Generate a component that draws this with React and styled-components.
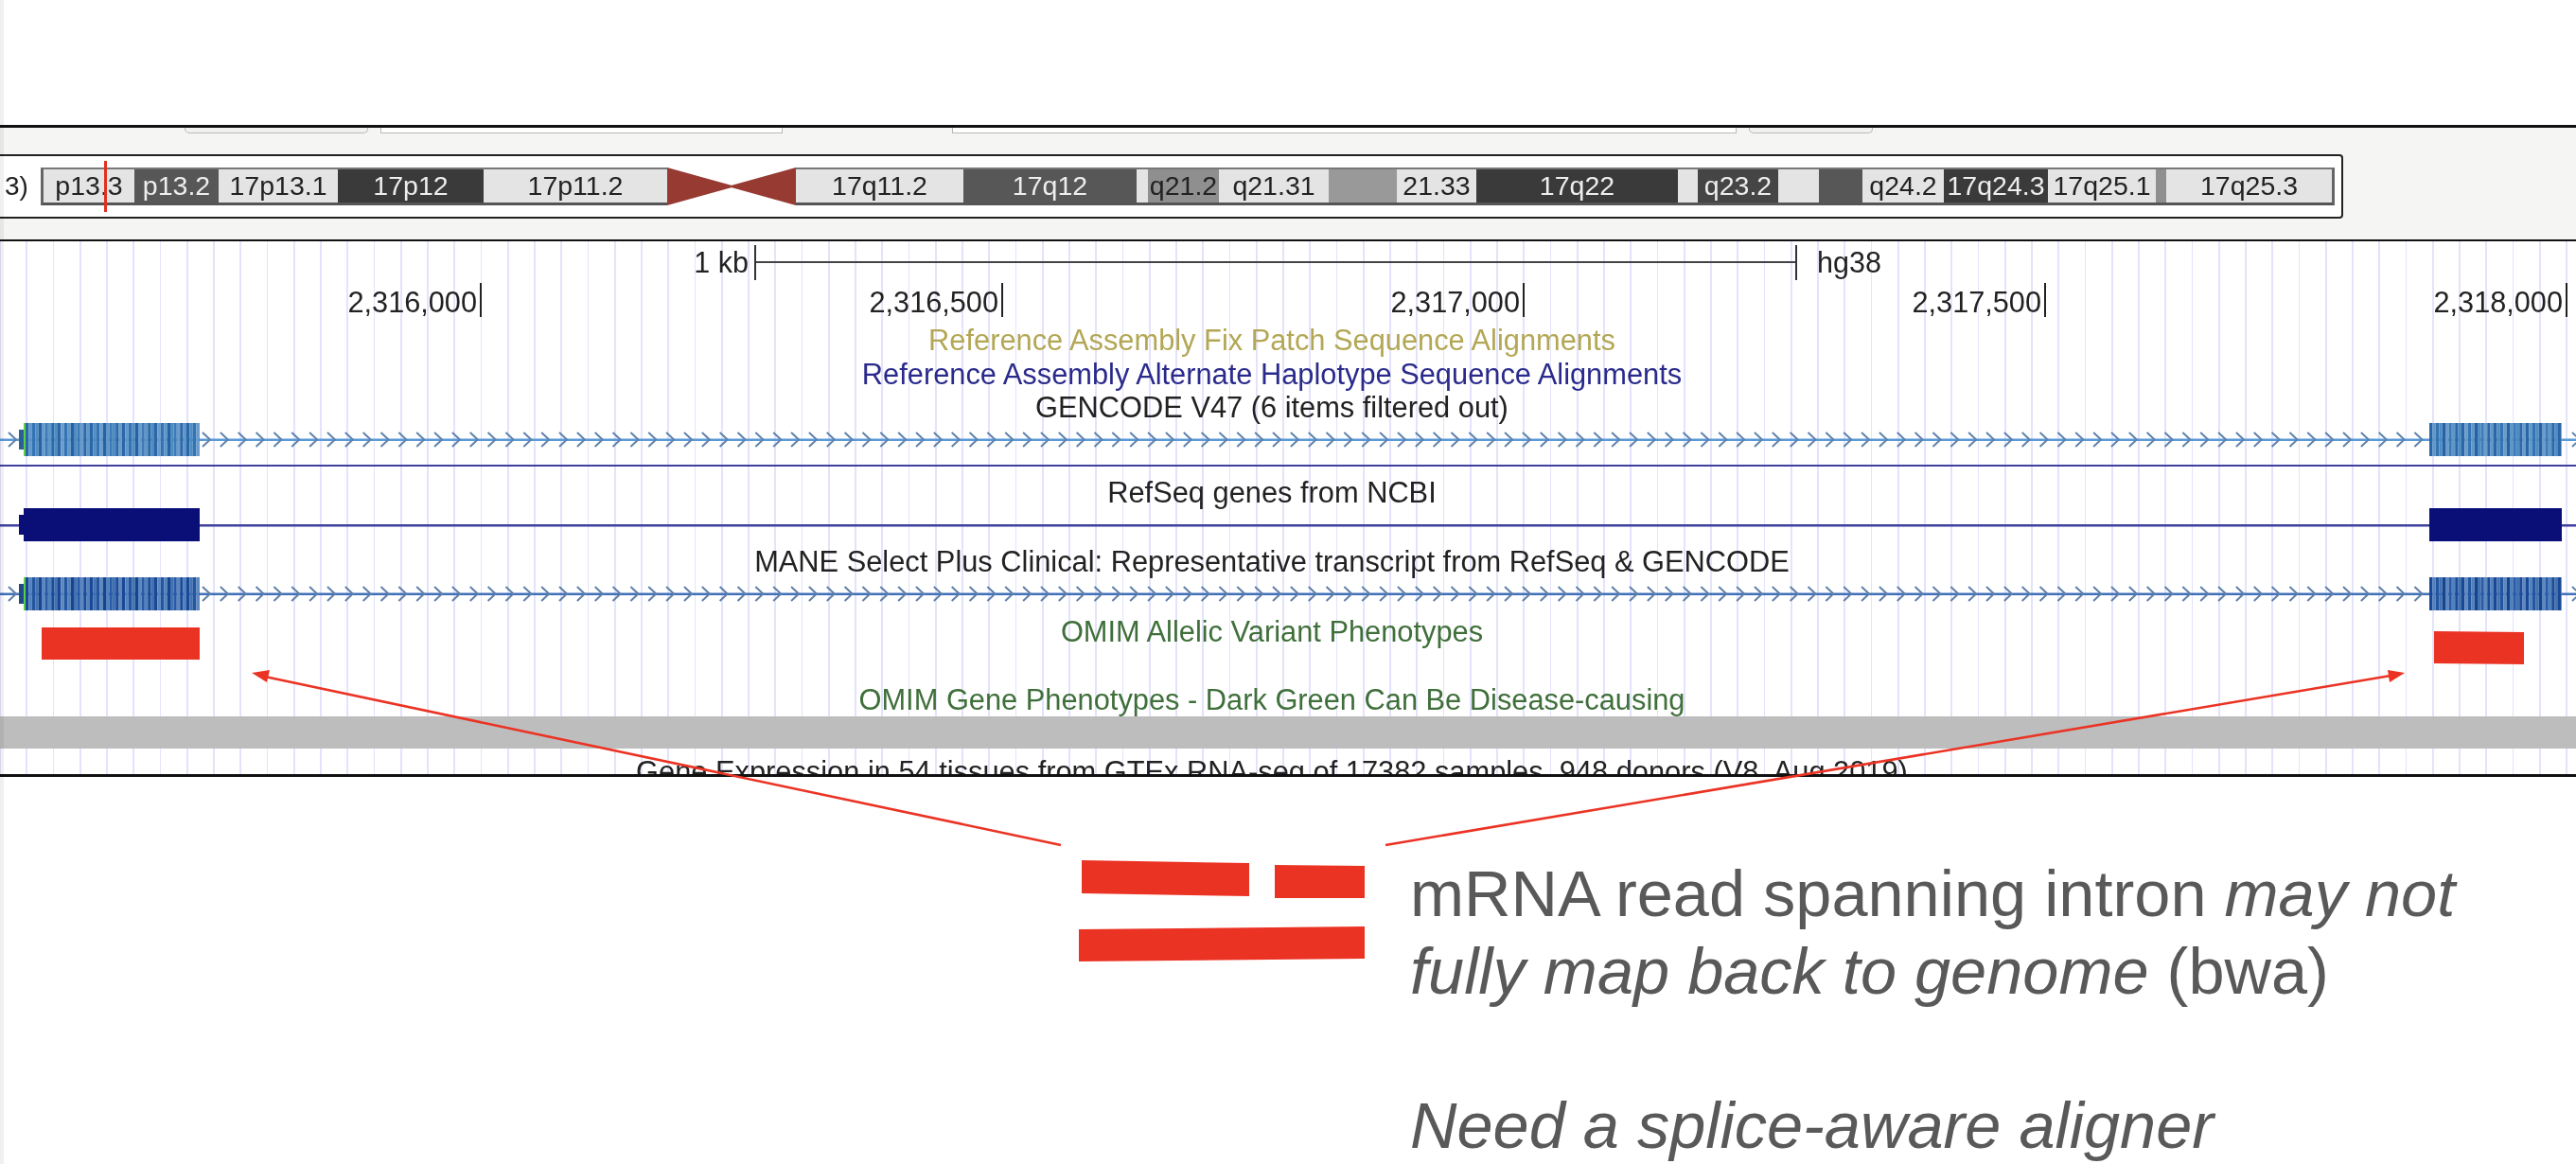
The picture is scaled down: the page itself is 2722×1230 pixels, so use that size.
import React from 'react';
import styled, { createGlobalStyle } from 'styled-components';

const GlobalStyle = createGlobalStyle`
    html, body {
        margin: 0;
        padding: 0;
        background: #fff;
    }
`;

const RED = '#eb3324';
const SANS = '"Liberation Sans", Arial, sans-serif';

const Page = styled.div`
    position: relative;
    width: 2722px;
    height: 1230px;
    overflow: hidden;
    padding-top: 132px;
    box-sizing: border-box;
    font-family: ${SANS};
    background: #fff;
`;

const LeftEdge = styled.div`
    position: absolute;
    left: 0;
    top: 0;
    bottom: 0;
    width: 4px;
    background: rgba(0, 0, 0, 0.06);
`;

const Frame = styled.div`
    border-top: 3px solid #111;
    filter: blur(0.7px);
`;

const ToolStrip = styled.div`
    display: flex;
    gap: 13px;
    height: 28px;
    padding-left: 195px;
    box-sizing: border-box;
    background: #f5f5f3;
`;

const ToolStub = styled.div`
    width: ${(props) => props.$w}px;
    height: 6px;
    margin-left: ${(props) => props.$ml || 0}px;
    box-sizing: border-box;
    border: 1px solid #b9b9b7;
    border-top: none;
    border-radius: ${(props) => (props.$round ? '0 0 5px 5px' : '0')};
    background: ${(props) => (props.$round ? '#f1f1ef' : '#fff')};
`;

const ChromRow = styled.div`
    padding-bottom: 22px;
    background: #f5f5f3;
`;

const ChromPanel = styled.div`
    display: flex;
    align-items: center;
    width: 2476px;
    height: 68px;
    box-sizing: border-box;
    border: 2px solid #222;
    border-left: none;
    border-radius: 0 4px 4px 0;
    background: #fff;
`;

const ChromLabel = styled.div`
    width: 43px;
    padding-left: 5px;
    box-sizing: border-box;
    font-size: 28px;
    color: #222;
`;

const Ideogram = styled.div`
    position: relative;
    display: flex;
    height: 40px;
`;

const Band = styled.div`
    width: ${(props) => props.$w}px;
    box-sizing: border-box;
    border-top: 2px solid #777;
    border-bottom: 3px solid #555;
    border-left: ${(props) => (props.$first ? '3px solid #666' : 'none')};
    border-right: ${(props) => (props.$last ? '3px solid #666' : 'none')};
    background: ${(props) => props.$bg};
    color: ${(props) => props.$fg};
    font-size: 28.5px;
    line-height: 35px;
    text-align: center;
    white-space: nowrap;
    overflow: visible;
`;

const Cursor = styled.div`
    position: absolute;
    left: 67px;
    top: -7px;
    width: 3px;
    height: 54px;
    background: #e2301f;
`;

const TrackArea = styled.div`
    height: 563px;
    overflow: hidden;
    border-top: 2px solid #111;
    border-bottom: 3px solid #111;
    background-color: #fff;
    background-image: repeating-linear-gradient(
        90deg,
        #e3e3fc 0,
        #e3e3fc 0.9px,
        transparent 0.9px,
        transparent 27.35px,
        #e3e3fc 27.35px,
        #e3e3fc 28.25px
    );
`;

const ScaleRow = styled.div`
    display: flex;
    align-items: center;
    height: 44px;
    font-size: 30.5px;
    color: #222;
`;

const ScaleStart = styled.div`
    width: 791px;
    text-align: right;
`;

const ScaleBar = styled.div`
    position: relative;
    width: 1102px;
    height: 37px;
    margin: 0 21px 0 6px;
    box-sizing: border-box;
    border-left: 2px solid #333;
    border-right: 2px solid #333;

    &::after {
        content: '';
        position: absolute;
        left: 0;
        right: 0;
        top: 17px;
        height: 2px;
        background: #444;
    }
`;

const Ruler = styled.div`
    display: grid;
    grid-template-columns: 509px repeat(4, 551px);
    height: 41px;
    font-size: 30.7px;
    color: #222;
`;

const RulerCell = styled.div`
    height: 36px;
    padding-right: 3px;
    box-sizing: border-box;
    border-right: 2px solid #222;
    text-align: right;
    line-height: 42px;
`;

const TrackLabel = styled.div`
    height: ${(props) => props.$h}px;
    margin-top: ${(props) => props.$mt || 0}px;
    padding-right: 34px;
    font-size: 30.8px;
    line-height: ${(props) => props.$h + 2}px;
    text-align: center;
    white-space: nowrap;
    color: ${(props) => props.$color || '#222'};
`;

const GeneSvg = styled.svg`
    display: block;
    width: 2722px;
    height: 35px;
`;

const Divider = styled.div`
    height: 2px;
    margin-top: 9px;
    background: #3f3f9f;
`;

const GrayBand = styled.div`
    height: 34px;
    background: #bdbdbd;
`;

const Caption = styled.div`
    margin: 83px 0 0 1490px;
    font-size: 68.5px;
    line-height: 81.6px;
    color: #595959;
    white-space: nowrap;
`;

const CaptionLine = styled.div`
    min-height: 81.6px;
`;

const Overlay = styled.svg`
    position: absolute;
    left: 0;
    top: 0;
    width: 2722px;
    height: 1230px;
    pointer-events: none;
`;

const BANDS = [
    { w: 99, bg: '#e4e4e4', fg: '#222', text: 'p13.3', first: true },
    { w: 89, bg: '#575757', fg: '#eee', text: 'p13.2' },
    { w: 126, bg: '#e4e4e4', fg: '#222', text: '17p13.1' },
    { w: 154, bg: '#3a3a3a', fg: '#eee', text: '17p12' },
    { w: 194, bg: '#e4e4e4', fg: '#222', text: '17p11.2' },
    { centromere: true, w: 136 },
    { w: 177, bg: '#e4e4e4', fg: '#222', text: '17q11.2' },
    { w: 183, bg: '#575757', fg: '#eee', text: '17q12' },
    { w: 12, bg: '#e4e4e4', fg: '#222', text: '' },
    { w: 75, bg: '#8f8f8f', fg: '#222', text: 'q21.2' },
    { w: 116, bg: '#e4e4e4', fg: '#222', text: 'q21.31' },
    { w: 72, bg: '#999', fg: '#222', text: '' },
    { w: 84, bg: '#e4e4e4', fg: '#222', text: '21.33' },
    { w: 213, bg: '#3a3a3a', fg: '#eee', text: '17q22' },
    { w: 21, bg: '#e4e4e4', fg: '#222', text: '' },
    { w: 85, bg: '#454545', fg: '#eee', text: 'q23.2' },
    { w: 43, bg: '#e4e4e4', fg: '#222', text: '' },
    { w: 46, bg: '#575757', fg: '#eee', text: '' },
    { w: 86, bg: '#e4e4e4', fg: '#222', text: 'q24.2' },
    { w: 110, bg: '#3a3a3a', fg: '#eee', text: '17q24.3' },
    { w: 114, bg: '#e4e4e4', fg: '#222', text: '17q25.1' },
    { w: 11, bg: '#8f8f8f', fg: '#222', text: '' },
    { w: 178, bg: '#e4e4e4', fg: '#222', text: '17q25.3', last: true },
];

const RULER = ['2,316,000', '2,316,500', '2,317,000', '2,317,500', '2,318,000'];

const GENCODE_TONES = {
    line: '#5a9ad6',
    chevron: '#5f82ad',
    dark: ['#2a66a8', '#3474b3', '#2563a5', '#3d7ab6', '#2c69a9'],
    light: ['#5f97c9', '#4f8cc2', '#6a9ccb'],
    utr: '#2b5f95',
};

const MANE_TONES = {
    line: '#3f6fb8',
    chevron: '#5f7fa8',
    dark: ['#1a4896', '#24559f', '#17448f', '#2a5aa6', '#1c4b98'],
    light: ['#5282bd', '#4272b2', '#5c88bf'],
    utr: '#1f4a86',
};

function Stripes({ x, width, tones }) {
    const step = 3.4;
    const count = Math.ceil(width / step);
    const bars = [];
    for (let i = 0; i < count; i++) {
        const color = i % 2 === 0 ? tones.dark[(i / 2) % tones.dark.length] : tones.light[((i - 1) / 2) % tones.light.length];
        bars.push(<rect key={i} x={x + i * step} y={0} width={Math.min(step, width - i * step)} height={35} fill={color} />);
    }
    return <g>{bars}</g>;
}

function StripedGene({ tones }) {
    const chevrons = [13];
    for (let cx = 218; cx < 2560; cx += 18.85) chevrons.push(cx);
    chevrons.push(2722);

    return (
        <GeneSvg viewBox="0 0 2722 35">
            <rect x="0" y="16.5" width="2722" height="2.5" fill={tones.line} />
            {chevrons.map((cx) => (
                <polyline
                    key={cx}
                    points={`${cx - 4},10 ${cx + 4},17.5 ${cx - 4},25`}
                    fill="none"
                    stroke={tones.chevron}
                    strokeWidth="2"
                />
            ))}
            <rect x="20" y="7" width="6" height="21" fill={tones.utr} />
            <rect x="25" y="-1" width="2" height="37" fill="#5ad04a" />
            <Stripes x={27} width={184} tones={tones} />
            <Stripes x={2567} width={140} tones={tones} />
        </GeneSvg>
    );
}

function SolidGene() {
    return (
        <GeneSvg viewBox="0 0 2722 35">
            <rect x="0" y="17" width="2722" height="2.5" fill="#3f3f9f" />
            <rect x="20" y="7" width="6" height="21" fill="#0a0f78" />
            <rect x="25" y="0" width="186" height="35" fill="#0a0f78" />
            <rect x="2567" y="0" width="140" height="35" fill="#0a0f78" />
        </GeneSvg>
    );
}

function Annotations() {
    return (
        <Overlay viewBox="0 0 2722 1230">
            <rect x="44" y="663" width="167" height="34" fill={RED} />
            <polygon points="2572,667 2667,668 2667,702 2572,701" fill={RED} />

            <line x1="1121" y1="893" x2="280" y2="715" stroke={RED} strokeWidth="2.6" />
            <polygon points="266,711 285,708 282,721" fill={RED} />
            <line x1="1464" y1="893" x2="2526" y2="714" stroke={RED} strokeWidth="2.6" />
            <polygon points="2541,711 2523,708 2525,721" fill={RED} />

            <polygon points="1143,909 1320,912 1320,947 1143,944" fill={RED} />
            <polygon points="1347,914 1442,915 1442,949 1347,949" fill={RED} />
            <polygon points="1140,982 1442,979 1442,1013 1140,1016" fill={RED} />
        </Overlay>
    );
}

function App() {
    return (
        <Page>
            <GlobalStyle />
            <Frame>
                <ToolStrip>
                    <ToolStub $w={194} $round />
                    <ToolStub $w={425} />
                    <ToolStub $w={829} $ml={166} />
                    <ToolStub $w={131} $round />
                </ToolStrip>
                <ChromRow>
                    <ChromPanel>
                        <ChromLabel>3)</ChromLabel>
                        <Ideogram>
                            {BANDS.map((band, i) =>
                                band.centromere ? (
                                    <svg key={i} width={band.w} height="40" viewBox="0 0 136 40">
                                        <polygon points="0,0 72,20 0,40" fill="#963a32" />
                                        <polygon points="136,0 64,20 136,40" fill="#963a32" />
                                    </svg>
                                ) : (
                                    <Band key={i} $w={band.w} $bg={band.bg} $fg={band.fg} $first={band.first} $last={band.last}>
                                        {band.text}
                                    </Band>
                                )
                            )}
                            <Cursor />
                        </Ideogram>
                    </ChromPanel>
                </ChromRow>
                <TrackArea>
                    <ScaleRow>
                        <ScaleStart>1 kb</ScaleStart>
                        <ScaleBar />
                        <span>hg38</span>
                    </ScaleRow>
                    <Ruler>
                        {RULER.map((pos) => (
                            <RulerCell key={pos}>{pos}</RulerCell>
                        ))}
                    </Ruler>
                    <TrackLabel $h={37} $color="#b3a755">Reference Assembly Fix Patch Sequence Alignments</TrackLabel>
                    <TrackLabel $h={36} $color="#2a2a8c">Reference Assembly Alternate Haplotype Sequence Alignments</TrackLabel>
                    <TrackLabel $h={34}>GENCODE V47 (6 items filtered out)</TrackLabel>
                    <StripedGene tones={GENCODE_TONES} />
                    <Divider />
                    <TrackLabel $h={34} $mt={10}>RefSeq genes from NCBI</TrackLabel>
                    <SolidGene />
                    <TrackLabel $h={34} $mt={4}>MANE Select Plus Clinical: Representative transcript from RefSeq &amp; GENCODE</TrackLabel>
                    <StripedGene tones={MANE_TONES} />
                    <TrackLabel $h={36} $mt={4} $color="#3f6f3a">OMIM Allelic Variant Phenotypes</TrackLabel>
                    <TrackLabel $h={36} $mt={36} $color="#3f6f3a">OMIM Gene Phenotypes - Dark Green Can Be Disease-causing</TrackLabel>
                    <GrayBand />
                    <TrackLabel $h={36} $mt={6}>Gene Expression in 54 tissues from GTEx RNA-seq of 17382 samples, 948 donors (V8, Aug 2019)</TrackLabel>
                </TrackArea>
            </Frame>
            <Caption>
                <CaptionLine>mRNA read spanning intron <em>may not</em></CaptionLine>
                <CaptionLine><em>fully map back to genome</em> (bwa)</CaptionLine>
                <CaptionLine />
                <CaptionLine><em>Need a splice-aware aligner</em></CaptionLine>
            </Caption>
            <LeftEdge />
            <Annotations />
        </Page>
    );
}

export default App;
